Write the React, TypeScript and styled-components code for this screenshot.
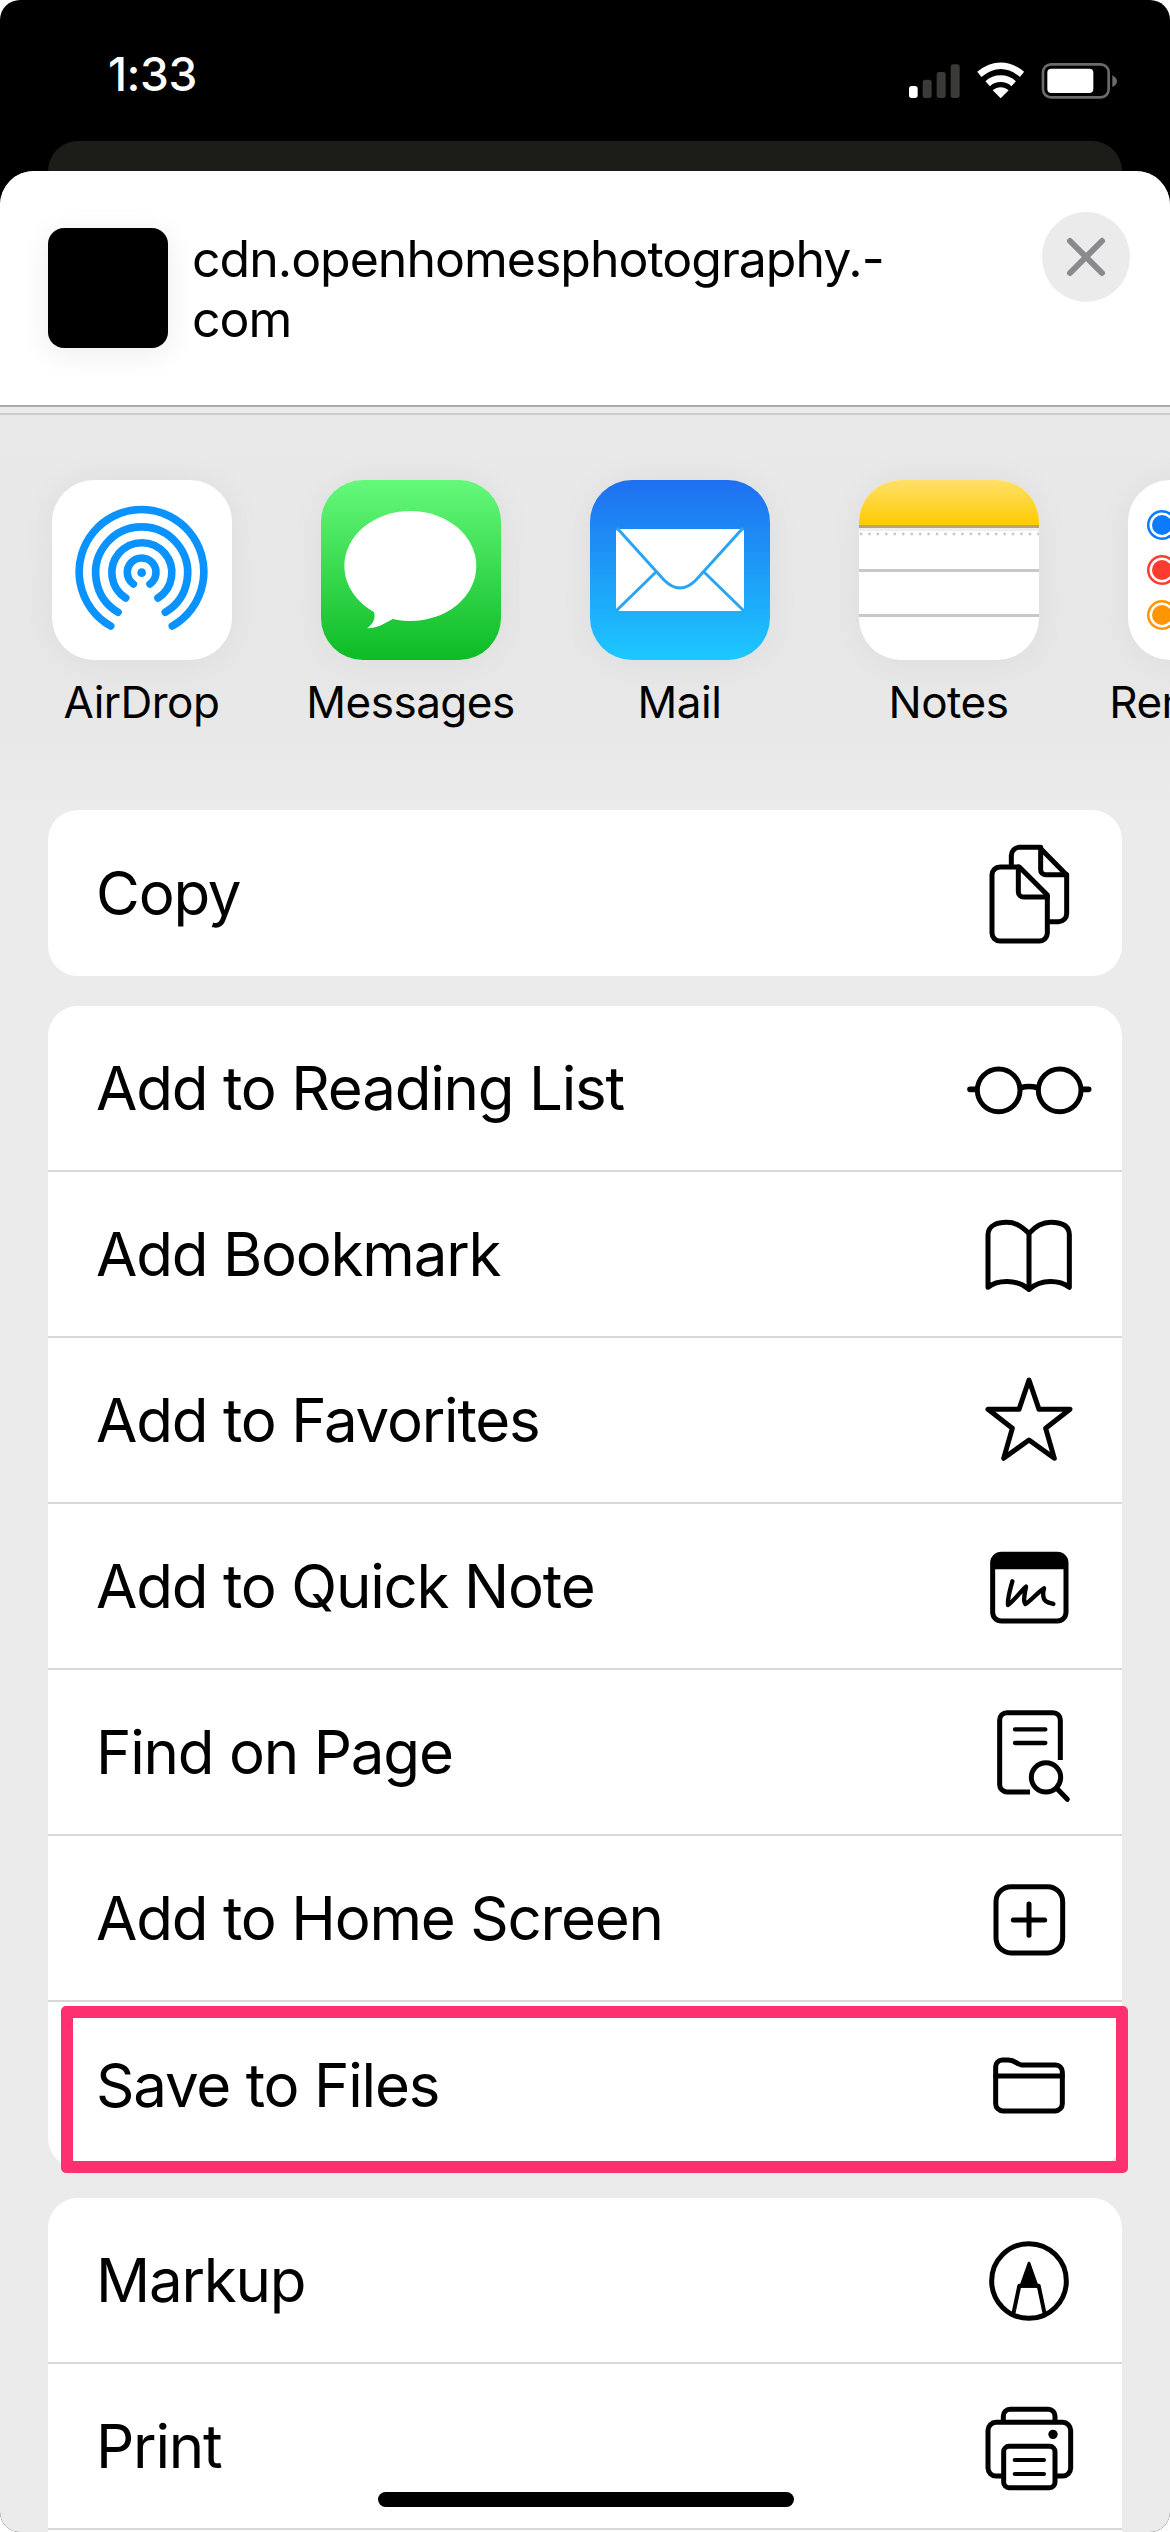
import React from 'react';
import styled, { createGlobalStyle } from 'styled-components';

const GlobalStyle = createGlobalStyle`
  html, body {
    margin: 0;
    padding: 0;
    background: #fff;
  }
  * {
    box-sizing: border-box;
  }
`;

const FONT = `Inter, "Liberation Sans", sans-serif`;

const Screen = styled.div`
  position: relative;
  width: 1170px;
  height: 2532px;
  overflow: hidden;
  border-radius: 20px;
  background: #000;
  font-family: ${FONT};
  color: #000;
`;

const StatusBar = styled.div`
  display: flex;
  align-items: flex-start;
  justify-content: space-between;
  height: 141px;
  padding: 47px 0 0 108px;
`;

const Time = styled.div`
  font-size: 46px;
  line-height: 54px;
  font-weight: 500;
  letter-spacing: -0.5px;
  color: #fff;
`;

const StatusIcons = styled.svg`
  width: 217px;
  height: 47px;
  margin: 10px 48px 0 0;
`;

const BehindCard = styled.div`
  height: 30px;
  margin: 0 48px;
  border-radius: 30px 30px 0 0;
  background: #1c1d18;
`;

const Sheet = styled.div`
  height: 2361px;
  border-radius: 34px 34px 0 0;
  background: #ebebeb;
  overflow: hidden;
`;

const Header = styled.div`
  display: flex;
  align-items: flex-start;
  height: 236px;
  padding: 41px 40px 0 48px;
  background: #fff;
  border-bottom: 2px solid #aaa;
`;

const Thumb = styled.div`
  flex: none;
  width: 120px;
  height: 120px;
  margin-top: 16px;
  border-radius: 16px;
  background: #000;
  box-shadow: 0 6px 30px rgba(0, 0, 0, 0.08);
`;

const Title = styled.div`
  margin: 17px 0 0 24px;
  font-size: 50px;
  line-height: 60px;
  letter-spacing: -1px;
`;

const CloseButton = styled.div`
  display: flex;
  align-items: center;
  justify-content: center;
  flex: none;
  width: 88px;
  height: 90px;
  margin-left: auto;
  border-radius: 50%;
  background: #ebebeb;
`;

const SubLine = styled.div`
  height: 8px;
  border-bottom: 2px solid #ccc;
`;

const AppRow = styled.div`
  display: flex;
  padding: 65px 0 0 7px;
  height: 395px;
  overflow: hidden;
  background: linear-gradient(#e9e9e9, #e7e7e7 70%, #ebebeb);
`;

const AppItem = styled.div`
  display: flex;
  flex: 0 0 269px;
  flex-direction: column;
  align-items: center;
`;

const AppIcon = styled.div<{ $bg: string }>`
  width: 180px;
  height: 180px;
  border-radius: 42px;
  background: ${(p) => p.$bg};
  box-shadow: 0 0 34px rgba(0, 0, 0, 0.05);
  overflow: hidden;

  svg {
    display: block;
    width: 180px;
    height: 180px;
  }
`;

const AppLabel = styled.div`
  margin-top: 15px;
  font-size: 44px;
  line-height: 54px;
  letter-spacing: -0.5px;
  white-space: nowrap;
`;

const Actions = styled.div`
  display: flex;
  flex-direction: column;
  gap: 30px;
  margin: 0 48px;
`;

const Card = styled.div`
  border-radius: 30px;
  background: #fff;
`;

const OpenCard = styled(Card)`
  min-height: 400px;
`;

const Row = styled.div<{ $flush?: boolean; $marked?: boolean }>`
  position: relative;
  display: flex;
  align-items: center;
  justify-content: space-between;
  height: 166px;
  padding: 0 33px 0 48px;
  border-bottom: ${(p) => (p.$flush ? 'none' : '2px solid #d8d8d8')};

  ${(p) =>
    p.$marked &&
    `
    &::after {
      content: '';
      position: absolute;
      top: 4px;
      left: 13px;
      right: -6px;
      bottom: -5px;
      border: 12px solid #ff3070;
      border-radius: 5px;
    }
  `}
`;

const RowLabel = styled.span`
  font-size: 60px;
  letter-spacing: -1.2px;
`;

const RowIcon = styled.svg`
  flex: none;
  width: 120px;
  height: 120px;
  overflow: visible;
  fill: none;
  stroke: #000;
  stroke-width: 15;
  stroke-linecap: round;
  stroke-linejoin: round;
`;

const HomeIndicator = styled.div`
  position: absolute;
  bottom: 25px;
  left: 378px;
  width: 416px;
  height: 15px;
  border-radius: 8px;
  background: #000;
`;

const airdropRings = [
  'M240 498A187 187 0 1 1 425 498',
  'M262 457A138 138 0 1 1 404 457',
  'M285 414A90 90 0 1 1 382 414',
  'M308 372A43 43 0 1 1 358 372',
];

const AirDropIcon = () => (
  <svg viewBox="64 60 540 540">
    {airdropRings.map((d) => (
      <path key={d} d={d} fill="none" stroke="#0a93ff" strokeWidth="23" strokeLinecap="round" />
    ))}
    <circle cx="333" cy="338" r="13" fill="#0a93ff" />
  </svg>
);

const MessagesIcon = () => (
  <svg viewBox="872 60 540 540">
    <ellipse cx="1140" cy="318" rx="198" ry="165" fill="#fff" />
    <path d="M1024 440C1042 470 1030 490 1010 505C1040 505 1065 490 1092 474Z" fill="#fff" />
  </svg>
);

const MailIcon = () => (
  <svg viewBox="0 0 180 180">
    <rect x="26" y="49" width="128" height="82" rx="3" fill="#fff" />
    <path
      d="M27 48L74 100Q90 116 106 100L153 48M66 92L26 131M114 92L154 131"
      fill="none"
      stroke="#2aa4f4"
      strokeWidth="3"
    />
  </svg>
);

const noteDots = Array.from({ length: 22 }, (_, i) => i * 8.45 + 2);

const NotesIcon = () => (
  <svg viewBox="0 0 180 180">
    <defs>
      <linearGradient id="notes" x1="0" y1="0" x2="0" y2="1">
        <stop offset="0" stopColor="#ffe06a" />
        <stop offset="1" stopColor="#ffcb00" />
      </linearGradient>
    </defs>
    <rect width="180" height="45" fill="url(#notes)" />
    <rect y="45" width="180" height="3" fill="#b3a67c" />
    <rect y="48" width="180" height="3" fill="#eee" />
    {noteDots.map((x) => (
      <circle key={x} cx={x} cy="54" r="1.4" fill="#c7c7cc" />
    ))}
    <rect y="89" width="180" height="3" fill="#c7c7cc" />
    <rect y="134" width="180" height="3" fill="#c7c7cc" />
  </svg>
);

const reminderDots = [
  { cy: 45, color: '#0a7aff' },
  { cy: 90, color: '#ff3b30' },
  { cy: 135, color: '#ff9500' },
];

const RemindersIcon = () => (
  <svg viewBox="0 0 180 180">
    {reminderDots.map((d) => (
      <g key={d.cy}>
        <circle cx="34" cy={d.cy} r="15" fill={d.color} />
        <circle cx="34" cy={d.cy} r="12.5" fill="#fff" />
        <circle cx="34" cy={d.cy} r="10" fill={d.color} />
      </g>
    ))}
  </svg>
);

const apps = [
  { name: 'AirDrop', bg: '#fff', icon: <AirDropIcon /> },
  { name: 'Messages', bg: 'linear-gradient(#65f97b, #0dbb25)', icon: <MessagesIcon /> },
  { name: 'Mail', bg: 'linear-gradient(#1f6ff0, #1cc8ff)', icon: <MailIcon /> },
  { name: 'Notes', bg: '#fff', icon: <NotesIcon /> },
  { name: 'Reminders', bg: '#fff', icon: <RemindersIcon /> },
];

const CopyIcon = () => (
  <RowIcon viewBox="207 39 360 360">
    <path d="M358 141H300A24 24 0 0 0 276 165V339A24 24 0 0 0 300 363H418A24 24 0 0 0 442 339V225Z" />
    <path d="M355 141V215A16 16 0 0 0 371 231H442" />
    <path d="M334 133V106A24 24 0 0 1 358 82H418L500 165V281A24 24 0 0 1 476 305H450" />
    <path d="M422 82V150A14 14 0 0 0 436 164H500" />
  </RowIcon>
);

const GlassesIcon = () => (
  <RowIcon viewBox="207 624 360 360">
    <circle cx="296" cy="811" r="64" />
    <circle cx="479" cy="811" r="64" />
    <path d="M362 803Q387 796 413 803M210 808H228M548 808H566" strokeWidth="17" />
  </RowIcon>
);

const BookIcon = () => (
  <RowIcon viewBox="207 -138 360 360">
    <path d="M387 -20C360 -45 345 -53 320 -53C295 -53 264 -45 264 -15V142C290 120 350 115 387 148C425 115 480 120 508 142V-15C508 -45 480 -53 452 -53C428 -53 410 -45 387 -20Z" />
    <path d="M387 -20V148" />
  </RowIcon>
);

const StarIcon = () => (
  <RowIcon viewBox="207 360 360 360">
    <path d="M387 420L417 508H510L437 565L463 655L387 600L311 655L337 565L264 508H357Z" />
  </RowIcon>
);

const QuickNoteIcon = () => (
  <RowIcon viewBox="207 858 360 360">
    <rect x="278" y="943" width="220" height="200" rx="26" />
    <path d="M278 965A22 22 0 0 1 300 943H476A22 22 0 0 1 498 965V988H278Z" fill="#000" strokeWidth="0" />
    <path
      d="M337 1024C330 1050 322 1075 324 1095C340 1085 365 1050 378 1040C375 1060 368 1085 376 1092C390 1085 415 1055 432 1045C428 1060 428 1080 440 1085C448 1090 455 1090 460 1092"
      strokeWidth="13"
    />
  </RowIcon>
);

const FindIcon = () => (
  <RowIcon viewBox="207 96 360 360">
    <path d="M481 300V180A22 22 0 0 0 459 158H321A22 22 0 0 0 299 180V374A22 22 0 0 0 321 396H390" strokeLinecap="butt" />
    <path d="M345 208H436M345 249H436" strokeWidth="13" />
    <circle cx="438" cy="352" r="44" />
    <path d="M470 385L502 418" />
  </RowIcon>
);

const AddHomeIcon = () => (
  <RowIcon viewBox="207 594 360 360">
    <rect x="288" y="680" width="200" height="199" rx="45" />
    <path d="M387 732V826M340 780H434" />
  </RowIcon>
);

const FolderIcon = () => (
  <RowIcon viewBox="207 -168 360 360" strokeWidth="13">
    <path d="M309 90H465A22 22 0 0 0 487 68V-28A20 20 0 0 0 467 -48H365C353 -48 347 -63 325 -63H307A20 20 0 0 0 287 -43V68A22 22 0 0 0 309 90Z" />
    <path d="M287 -15H487" />
  </RowIcon>
);

const MarkupIcon = () => (
  <RowIcon viewBox="207 423 360 360">
    <circle cx="387" cy="606" r="112" />
    <path d="M387 552L362 622H412Z" fill="#000" strokeWidth="8" />
    <path d="M358 620H416M358 620L341 700M416 620L433 700" strokeWidth="12" />
  </RowIcon>
);

const PrintIcon = () => (
  <RowIcon viewBox="207 918 360 360">
    <path d="M308 1188H288A24 24 0 0 1 264 1164V1051A24 24 0 0 1 288 1027H488A24 24 0 0 1 512 1051V1164A24 24 0 0 1 488 1188H468" />
    <path d="M310 1025V1008A20 20 0 0 1 330 988H445A20 20 0 0 1 465 1008V1025" />
    <rect x="311" y="1099" width="154" height="124" rx="16" />
    <path d="M344 1140H432M344 1182H432" strokeWidth="12" />
    <circle cx="459" cy="1063" r="14" fill="#000" stroke="none" />
  </RowIcon>
);

function App() {
  return (
    <>
      <GlobalStyle />
      <Screen>
        <StatusBar>
          <Time>1:33</Time>
          <StatusIcons viewBox="130 60 651 141">
            <rect x="142" y="147" width="26" height="36" rx="8" fill="#fff" />
            <rect x="183" y="128" width="27" height="55" rx="8" fill="#3a3a38" />
            <rect x="225" y="105" width="27" height="78" rx="8" fill="#3a3a38" />
            <rect x="267" y="82" width="27" height="101" rx="8" fill="#3a3a38" />
            <path d="M353 112C395 78 440 78 481 112M378 140C400 120 434 120 456 140" fill="none" stroke="#fff" strokeWidth="20" />
            <path d="M417 184L393 160C408 148 426 148 441 160Z" fill="#fff" />
            <rect x="544" y="82" width="197" height="99" rx="24" fill="none" stroke="#6b6b6b" strokeWidth="8" />
            <rect x="557" y="95" width="138" height="73" rx="12" fill="#fff" />
            <path d="M752 115C762 120 766 128 766 133C766 138 762 146 752 150Z" fill="#6b6b6b" />
          </StatusIcons>
        </StatusBar>
        <BehindCard />
        <Sheet>
          <Header>
            <Thumb />
            <Title>
              cdn.openhomesphotography.-
              <br />
              com
            </Title>
            <CloseButton>
              <svg width="40" height="40" viewBox="0 0 40 40">
                <path d="M4 4L36 36M36 4L4 36" stroke="#8a8a8e" strokeWidth="6" strokeLinecap="round" />
              </svg>
            </CloseButton>
          </Header>
          <SubLine />
          <AppRow>
            {apps.map((app) => (
              <AppItem key={app.name}>
                <AppIcon $bg={app.bg}>{app.icon}</AppIcon>
                <AppLabel>{app.name}</AppLabel>
              </AppItem>
            ))}
          </AppRow>
          <Actions>
            <Card>
              <Row $flush>
                <RowLabel>Copy</RowLabel>
                <CopyIcon />
              </Row>
            </Card>
            <Card>
              <Row>
                <RowLabel>Add to Reading List</RowLabel>
                <GlassesIcon />
              </Row>
              <Row>
                <RowLabel>Add Bookmark</RowLabel>
                <BookIcon />
              </Row>
              <Row>
                <RowLabel>Add to Favorites</RowLabel>
                <StarIcon />
              </Row>
              <Row>
                <RowLabel>Add to Quick Note</RowLabel>
                <QuickNoteIcon />
              </Row>
              <Row>
                <RowLabel>Find on Page</RowLabel>
                <FindIcon />
              </Row>
              <Row>
                <RowLabel>Add to Home Screen</RowLabel>
                <AddHomeIcon />
              </Row>
              <Row $flush $marked>
                <RowLabel>Save to Files</RowLabel>
                <FolderIcon />
              </Row>
            </Card>
            <OpenCard>
              <Row>
                <RowLabel>Markup</RowLabel>
                <MarkupIcon />
              </Row>
              <Row>
                <RowLabel>Print</RowLabel>
                <PrintIcon />
              </Row>
            </OpenCard>
          </Actions>
        </Sheet>
        <HomeIndicator />
      </Screen>
    </>
  );
}

export default App;
